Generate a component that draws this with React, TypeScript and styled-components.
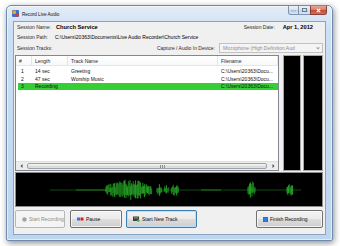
import React, { useMemo } from "react";
import styled, { createGlobalStyle, css } from "styled-components";

const GlobalStyle = createGlobalStyle`
  html, body {
    margin: 0;
    padding: 0;
    background: #ffffff;
  }
  body {
    font-family: "Liberation Sans", Arial, sans-serif;
    color: #1b1b1b;
  }
  * {
    box-sizing: border-box;
  }
`;

const Desktop = styled.div`
  width: 340px;
  height: 246px;
  padding: 5px 0 0 6px;
  overflow: hidden;
`;

const Frame = styled.div`
  width: 327px;
  height: 236px;
  display: flex;
  flex-direction: column;
  padding: 0 6px 5px 6px;
  border: 1px solid #6f8cb0;
  border-radius: 5px 5px 2px 2px;
  background: linear-gradient(180deg, #e3edf8 0%, #cddff2 10%, #bed5ee 100%);
  box-shadow: 1px 2px 6px rgba(0, 0, 0, 0.45), inset 0 0 0 1px rgba(255, 255, 255, 0.55);
`;

const TitleBar = styled.div`
  height: 15px;
  display: flex;
  align-items: center;
  gap: 3px;
  margin-left: -1px;
`;

const Title = styled.span`
  font-size: 4.6px;
  color: #111;
  padding-top: 1px;
`;

const Controls = styled.div`
  margin-left: auto;
  align-self: flex-start;
  display: flex;
  margin-right: -1px;
`;

const CtrlButton = styled.div<{ $w: number; $close?: boolean }>`
  width: ${(p) => p.$w}px;
  height: 9px;
  display: flex;
  align-items: center;
  justify-content: center;
  border: 1px solid #7d93ae;
  border-top: none;
  margin-left: -1px;
  background: linear-gradient(180deg, #eef3fa 0%, #d5e1ef 50%, #c3d3e6 51%, #d8e4f1 100%);
  ${(p) =>
    p.$close &&
    css`
      border-color: #87413a;
      border-radius: 0 0 3px 0;
      background: linear-gradient(180deg, #e8a597 0%, #d77c6a 48%, #c24a35 52%, #d3705a 100%);
    `}
  ${(p) =>
    p.$w === 11 &&
    css`
      border-radius: 0 0 0 3px;
    `}
`;

const Client = styled.div`
  flex: 1;
  display: flex;
  flex-direction: column;
  background: #f0f0f0;
  border: 1px solid #8aa3c0;
  padding: 0 2px 6px 1px;
`;

const InfoRow = styled.div<{ $h: number }>`
  height: ${(p) => p.$h}px;
  display: flex;
  align-items: center;
  padding-left: 2px;
  font-size: 5px;
  white-space: nowrap;
`;

const Label = styled.span<{ $w?: number }>`
  color: #2a2a2a;
  ${(p) => p.$w && `width: ${p.$w}px; flex: none;`}
`;

const Value = styled.span<{ $bold?: boolean }>`
  color: #000;
  ${(p) =>
    p.$bold &&
    css`
      font-weight: bold;
      font-size: 5.7px;
    `}
`;

const Spacer = styled.div<{ $w?: number }>`
  flex: ${(p) => (p.$w ? "none" : "1")};
  ${(p) => p.$w && `width: ${p.$w}px;`}
`;

const Combo = styled.div`
  width: 104px;
  height: 10px;
  margin-left: 4px;
  display: flex;
  align-items: center;
  padding-left: 3px;
  border: 1px solid #c2c2c2;
  background: #f4f4f4;
  color: #8d8d8d;
  font-size: 5px;
`;

const ComboArrow = styled.div`
  margin-left: auto;
  width: 9px;
  display: flex;
  justify-content: center;
`;

const Main = styled.div`
  height: 116px;
  margin-top: 1px;
  display: flex;
`;

const ListView = styled.div`
  width: 264px;
  display: flex;
  flex-direction: column;
  background: #ffffff;
  border: 1px solid #828790;
  font-size: 5px;
`;

const Header = styled.div`
  height: 10px;
  display: flex;
  border-bottom: 1px solid #e3e6ea;
  background: linear-gradient(180deg, #ffffff 0%, #f7f8fa 100%);
`;

const HeadCell = styled.div<{ $w: number }>`
  width: ${(p) => p.$w}px;
  flex: none;
  display: flex;
  align-items: center;
  padding-left: 3px;
  border-right: 1px solid #e3e6ea;
  color: #2a2a2a;
`;

const Body = styled.div`
  flex: 1;
  padding-top: 1.5px;
`;

const Row = styled.div<{ $selected?: boolean }>`
  height: 7.5px;
  margin-left: 2px;
  display: flex;
  align-items: center;
  color: #111;
  ${(p) =>
    p.$selected &&
    css`
      background: #35cf35;
    `}
`;

const Cell = styled.div<{ $w: number }>`
  width: ${(p) => p.$w}px;
  flex: none;
  padding-left: 3px;
  white-space: nowrap;
`;

const HScroll = styled.div`
  height: 9px;
  display: flex;
  background: #ececec;
  border-top: 1px solid #e0e0e0;
`;

const ScrollArrow = styled.div`
  width: 10px;
  display: flex;
  align-items: center;
  justify-content: center;
`;

const Thumb = styled.div`
  flex: 1;
  margin: 1px 1px;
  display: flex;
  align-items: center;
  justify-content: center;
  border: 1px solid #9ea3a9;
  border-radius: 2px;
  background: linear-gradient(180deg, #f6f6f6 0%, #e4e4e4 50%, #d8d8d8 51%, #e0e0e0 100%);
  padding-left: 30px;
`;

const Grip = styled.div`
  width: 5px;
  height: 3px;
  border-left: 1px solid #8e8e8e;
  border-right: 1px solid #8e8e8e;
  position: relative;
  &::after {
    content: "";
    position: absolute;
    left: 1px;
    top: 0;
    width: 1px;
    height: 3px;
    background: #8e8e8e;
  }
`;

const Meter = styled.div<{ $w: number; $gap: number }>`
  width: ${(p) => p.$w}px;
  margin-left: ${(p) => p.$gap}px;
  background: #000;
  border: 1px solid #a7a7a7;
`;

const Wave = styled.div`
  height: 35px;
  margin-top: 1px;
  background: #000;
  border: 1px solid #8c8c8c;
  display: flex;
`;

const ButtonRow = styled.div`
  height: 18px;
  margin-top: 3px;
  display: flex;
`;

const Button = styled.div<{ $w: number; $gap?: number; $disabled?: boolean; $focused?: boolean }>`
  width: ${(p) => p.$w}px;
  margin-left: ${(p) => p.$gap ?? 0}px;
  display: flex;
  align-items: center;
  gap: 2px;
  padding-left: 6px;
  font-size: 5px;
  white-space: nowrap;
  color: #111;
  border: 1px solid #707070;
  border-radius: 2px;
  background: linear-gradient(180deg, #f2f2f2 0%, #ebebeb 50%, #dddddd 51%, #cfcfcf 100%);
  box-shadow: inset 0 0 0 1px rgba(255, 255, 255, 0.7);
  ${(p) =>
    p.$disabled &&
    css`
      color: #8c8c8c;
      border-color: #b5b8bb;
      background: #f4f4f4;
      box-shadow: none;
    `}
  ${(p) =>
    p.$focused &&
    css`
      border-color: #3c7fb1;
      box-shadow: inset 0 0 0 1px #b8e0f8;
    `}
`;

function rng(seed: number) {
  let s = seed;
  return () => {
    s = (s * 1103515245 + 12345) % 2147483648;
    return s / 2147483648;
  };
}

type Spike = { x: number; a: number; b: number; c: string };

function Waveform() {
  const spikes = useMemo(() => {
    const r = rng(7);
    const list: Spike[] = [];
    const clusters: [number, number, number][] = [
      [90, 136, 11],
      [141, 146, 7],
      [148, 153, 6],
      [155, 163, 7],
      [232, 240, 9],
      [271, 277, 9],
    ];
    clusters.forEach(([from, to, amp]) => {
      for (let x = from; x <= to; x += 0.8) {
        const env = Math.sin(((x - from) / (to - from)) * Math.PI) * 0.6 + 0.4;
        const a = amp * env * (0.3 + r() * 0.7);
        const b = amp * env * (0.3 + r() * 0.7);
        const c = r() > 0.5 ? "#33d633" : "#22a322";
        list.push({ x, a, b, c });
      }
    });
    return list;
  }, []);

  return (
    <svg width="306" height="33" viewBox="0 0 306 33">
      <line x1="34" y1="17" x2="90" y2="17" stroke="#145a14" strokeWidth="0.8" />
      <line x1="162" y1="17" x2="285" y2="17" stroke="#145a14" strokeWidth="0.8" />
      <line x1="60" y1="17" x2="90" y2="17" stroke="#1f8a1f" strokeWidth="0.8" />
      <line x1="185" y1="17" x2="205" y2="17" stroke="#1f8a1f" strokeWidth="0.8" />
      {spikes.map((s, i) => (
        <line key={i} x1={s.x} y1={17 - s.a} x2={s.x} y2={17 + s.b} stroke={s.c} strokeWidth="0.7" />
      ))}
    </svg>
  );
}

const shortPath = "C:\\Users\\20363\\Docu...";

const tracks = [
  { n: "1", len: "14 sec", name: "Greeting", file: shortPath },
  { n: "2", len: "47 sec", name: "Worship Music", file: shortPath },
  { n: "3", len: "Recording", name: "", file: shortPath, selected: true },
];

function App() {
  return (
    <Desktop>
      <GlobalStyle />
      <Frame>
        <TitleBar>
          <svg width="7" height="7" viewBox="0 0 7 7">
            <rect x="0" y="0" width="7" height="7" rx="1" fill="#3d6fc4" />
            <rect x="0.5" y="0.5" width="3.5" height="3.5" fill="#f0a030" />
            <rect x="3.5" y="3.5" width="3" height="3" fill="#d83c2c" />
          </svg>
          <Title>Record Live Audio</Title>
          <Controls>
            <CtrlButton $w={11}>
              <svg width="5" height="3" viewBox="0 0 5 3">
                <rect x="0" y="1.5" width="5" height="1.2" fill="#ffffff" stroke="#55677d" strokeWidth="0.3" />
              </svg>
            </CtrlButton>
            <CtrlButton $w={13}>
              <svg width="5" height="4" viewBox="0 0 5 4">
                <rect x="0.4" y="0.4" width="4.2" height="3.2" fill="none" stroke="#55677d" strokeWidth="0.8" />
              </svg>
            </CtrlButton>
            <CtrlButton $w={17} $close>
              <svg width="5" height="5" viewBox="0 0 5 5">
                <path d="M0.8 0.8 L4.2 4.2 M4.2 0.8 L0.8 4.2" stroke="#ffffff" strokeWidth="1.2" />
              </svg>
            </CtrlButton>
          </Controls>
        </TitleBar>
        <Client>
          <InfoRow $h={10}>
            <Label $w={39}>Session Name:</Label>
            <Value $bold>Church Service</Value>
            <Spacer />
            <Label $w={39}>Session Date:</Label>
            <Value $bold>Apr 1, 2012</Value>
            <Spacer $w={10} />
          </InfoRow>
          <InfoRow $h={10}>
            <Label $w={38}>Session Path:</Label>
            <Value>C:\Users\20363\Documents\Live Audio Recorder\Church Service</Value>
          </InfoRow>
          <InfoRow $h={12}>
            <Label>Session Tracks:</Label>
            <Spacer />
            <Label>Capture / Audio In Device:</Label>
            <Combo>
              Microphone (High Definition Aud
              <ComboArrow>
                <svg width="4" height="3" viewBox="0 0 4 3">
                  <path d="M0 0.5 L4 0.5 L2 2.5 Z" fill="#9a9a9a" />
                </svg>
              </ComboArrow>
            </Combo>
          </InfoRow>
          <Main>
            <ListView>
              <Header>
                <HeadCell $w={16}>#</HeadCell>
                <HeadCell $w={36}>Length</HeadCell>
                <HeadCell $w={150}>Track Name</HeadCell>
                <HeadCell $w={60}>Filename</HeadCell>
              </Header>
              <Body>
                {tracks.map((t) => (
                  <Row key={t.n} $selected={t.selected}>
                    <Cell $w={14}>{t.n}</Cell>
                    <Cell $w={36}>{t.len}</Cell>
                    <Cell $w={150}>{t.name}</Cell>
                    <Cell $w={60}>{t.file}</Cell>
                  </Row>
                ))}
              </Body>
              <HScroll>
                <ScrollArrow>
                  <svg width="3" height="4" viewBox="0 0 3 4">
                    <path d="M2.5 0 L0.5 2 L2.5 4 Z" fill="#4d4d4d" />
                  </svg>
                </ScrollArrow>
                <Thumb>
                  <Grip />
                </Thumb>
                <ScrollArrow>
                  <svg width="3" height="4" viewBox="0 0 3 4">
                    <path d="M0.5 0 L2.5 2 L0.5 4 Z" fill="#4d4d4d" />
                  </svg>
                </ScrollArrow>
              </HScroll>
            </ListView>
            <Meter $w={18} $gap={4} />
            <Meter $w={20} $gap={2} />
          </Main>
          <Wave>
            <Waveform />
          </Wave>
          <ButtonRow>
            <Button $w={50} $disabled>
              <svg width="5" height="5" viewBox="0 0 5 5">
                <circle cx="2.5" cy="2.5" r="2.2" fill="#a3a3a3" />
              </svg>
              Start Recording
            </Button>
            <Button $w={52} $gap={5}>
              <svg width="7" height="4" viewBox="0 0 7 4">
                <rect x="0" y="0.5" width="3" height="3" fill="#3b72d9" />
                <rect x="3.5" y="0.5" width="3" height="3" fill="#d42222" />
              </svg>
              Pause
            </Button>
            <Button $w={71} $gap={4} $focused>
              <svg width="7" height="6" viewBox="0 0 7 6">
                <rect x="0" y="0.5" width="6" height="4.5" fill="#3e3e3e" />
                <rect x="1" y="1.3" width="4" height="1.2" fill="#8a8a8a" />
                <path d="M5.2 3.2 V6 M3.8 4.6 H6.6" stroke="#28b828" strokeWidth="1.1" />
              </svg>
              Start New Track
            </Button>
            <Spacer />
            <Button $w={67}>
              <svg width="5" height="5" viewBox="0 0 5 5">
                <rect x="0" y="0" width="5" height="5" fill="#2f7fdc" stroke="#1b5ab0" strokeWidth="0.6" />
              </svg>
              Finish Recording
            </Button>
          </ButtonRow>
        </Client>
      </Frame>
    </Desktop>
  );
}

export default App;
